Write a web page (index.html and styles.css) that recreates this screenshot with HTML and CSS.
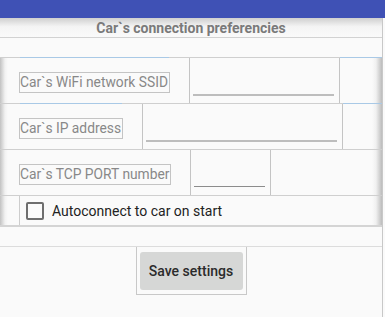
FILE: index.html
```html
<!DOCTYPE html>
<html lang="en">
<head>
  <meta charset="UTF-8">
  <title>Car connection preferences</title>
  <link rel="stylesheet" href="styles.css">
</head>
<body>
  <div class="appbar"></div>

  <div class="page">
    <div class="title">Car`s connection preferencies</div>
    <div class="spacer"></div>

    <!-- Preferences table -->
    <div class="prefs">
      <div class="row">
        <div class="label-cell focus-top"><span class="label">Car`s WiFi network SSID</span></div>
        <div class="input-cell input-ssid"><div class="underline"></div></div>
        <div class="extra-cell focus-top"></div>
      </div>

      <div class="row">
        <div class="label-cell focus-top"><span class="label">Car`s IP address</span></div>
        <div class="input-cell input-ip"><div class="underline"></div></div>
        <div class="extra-cell focus-top"></div>
      </div>

      <div class="row">
        <div class="label-cell"><span class="label">Car`s TCP PORT number</span></div>
        <div class="input-cell input-port"><div class="underline thin"></div></div>
        <div class="extra-cell"></div>
      </div>

      <div class="check-row">
        <div class="check-gutter"></div>
        <label class="check">
          <span class="box"></span>
          <span>Autoconnect to car on start</span>
        </label>
      </div>
    </div>

    <div class="footer">
      <div class="btn-wrap">
        <button type="button" class="save-btn">Save settings</button>
      </div>
    </div>
  </div>
</body>
</html>
```

FILE: styles.css
```css
body {
  margin: 0;
  padding: 0;
  background: #fafafa;
  font-family: Roboto, "Liberation Sans", sans-serif;
}

.appbar {
  height: 18px;
  background: #3f51b5;
}

.page {
  width: 382px;
  border-right: 1px solid #c8c8c8;
  height: 299px;
}

.title {
  height: 19px;
  line-height: 20px;
  text-align: center;
  font-size: 14px;
  font-weight: bold;
  color: #7a7a7a;
  background: linear-gradient(#cfcfcf, #f4f4f4 45%, #fafafa);
  border-bottom: 1px solid #d2d2d2;
}

.spacer {
  height: 19px;
}

.prefs {
  background: linear-gradient(to right, #c2c2c2 0, #f2f2f2 5px, #fafafa 8px, #fafafa calc(100% - 10px), #f0f0f0 calc(100% - 6px), #bcbcbc 100%);
}

.row {
  display: flex;
  height: 45px;
  border-top: 1px solid #cfcfcf;
}

.label-cell {
  padding: 14px 19px 0 19px;
  position: relative;
}

.focus-top::before {
  content: "";
  position: absolute;
  top: -1px;
  left: 20px;
  right: 20px;
  height: 1px;
  background: #a9c9e6;
}

.extra-cell.focus-top::before {
  left: 0;
  right: 0;
}

.label {
  display: block;
  height: 19px;
  line-height: 19px;
  padding: 0 1px 0 0;
  border: 1px solid #c4c4c4;
  font-size: 13.8px;
  color: #888;
  white-space: nowrap;
}

.input-cell {
  border-left: 1px solid #c4c4c4;
}

.input-ssid {
  width: 149px;
}

.input-ip {
  width: 199px;
}

.input-port {
  width: 79px;
}

.underline {
  margin: 36px 5px 0 3px;
  height: 2px;
  background: #bdbdbd;
}

.underline.thin {
  height: 1px;
  background: #8c8c8c;
}

.extra-cell {
  flex: 1;
  border-left: 1px solid #c4c4c4;
  position: relative;
}

.check-row {
  display: flex;
  height: 29px;
  border-top: 1px solid #cfcfcf;
  border-bottom: 2px solid #d4d4d4;
}

.check-gutter {
  width: 19px;
  border-right: 1px solid #cdcdcd;
}

.check {
  display: flex;
  align-items: center;
  gap: 8px;
  margin-left: 6px;
  font-size: 14px;
  color: #222;
}

.box {
  width: 14px;
  height: 14px;
  border: 2px solid #6e6e6e;
  border-radius: 2px;
}

.footer {
  margin-top: 19px;
  border-top: 1px solid #dcdcdc;
  display: flex;
  justify-content: center;
}

.btn-wrap {
  border: 1px solid #c8c8c8;
  border-top: none;
  padding: 5px 3px 4px 3px;
}

.save-btn {
  width: 103px;
  height: 38px;
  border: none;
  border-radius: 3px;
  background: #d6d7d6;
  font-family: Roboto, "Liberation Sans", sans-serif;
  font-size: 14px;
  font-weight: 500;
  color: #2b2b2b;
  padding: 0;
}
```
